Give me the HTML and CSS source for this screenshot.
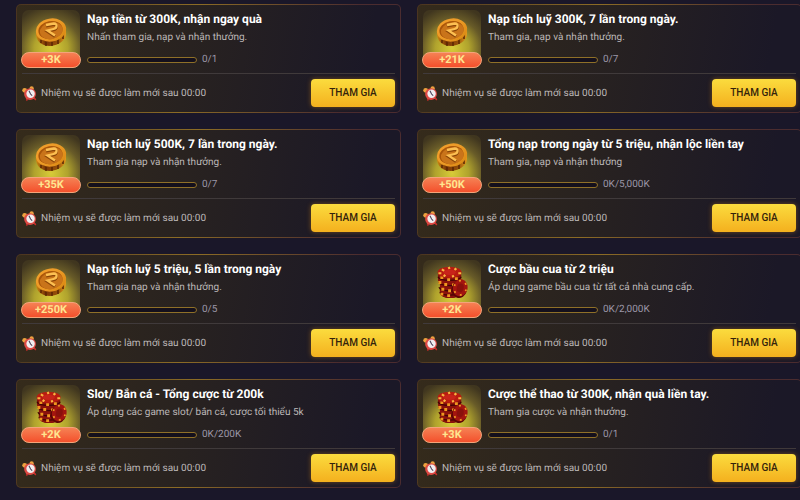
FILE: index.html
```
<!DOCTYPE html>
<html lang="vi">
<head>
  <meta charset="UTF-8">
  <meta name="viewport" content="width=device-width, initial-scale=1.0">
  <title>Nhiệm vụ</title>
  <link rel="stylesheet" href="styles.css">
</head>
<body>
  <svg class="sprite" aria-hidden="true">
    <defs>
      <linearGradient id="coinFace" x1="0" y1="0" x2="1" y2="1">
        <stop offset="0" stop-color="#f5a02c"/>
        <stop offset="0.5" stop-color="#eb9a26"/>
        <stop offset="1" stop-color="#d8860f"/>
      </linearGradient>
      <linearGradient id="coinEdge" x1="0" y1="0" x2="1" y2="0">
        <stop offset="0" stop-color="#d08a12"/>
        <stop offset="0.3" stop-color="#7a3606"/>
        <stop offset="0.7" stop-color="#94500a"/>
        <stop offset="1" stop-color="#e59a1c"/>
      </linearGradient>
      <symbol id="coin" viewBox="0 0 32 30">
        <path d="M1 15v3c1 7 6 11 14 11 9-.5 16-6 16-12v-5z" fill="url(#coinEdge)"/>
        <path d="M6 23v3M11 25v4M17 25v4M23 22v5M28 17v5" stroke="#5a2603" stroke-width="1.500"/>
        <ellipse cx="16" cy="13" rx="15.200" ry="11.500" transform="rotate(-10 16 13)" fill="url(#coinFace)"/>
        <ellipse cx="15.500" cy="13" rx="12.200" ry="9" transform="rotate(-10 16 13)" fill="#a9560a"/>
        <ellipse cx="16.200" cy="13.800" rx="11.500" ry="8.300" transform="rotate(-10 16 13)" fill="#c9741a"/>
        <path d="M11 9l8-1.500c3.500 0 3.500 4.500-.5 5.500l-6 1.500 7.500 5" fill="none" stroke="#8a4508" stroke-width="2.800"/>
        <path d="M11 8l8-1.500c3.500 0 3.500 4.500-.5 5.500l-6 1.500 7.500 5" fill="none" stroke="#fdc052" stroke-width="2.300"/>
      </symbol>
      <symbol id="chips" viewBox="0 0 32 34">
        <path d="M3 22v6c1 3 5 5 10 5s9-2 10-5v-6z" fill="#5c0606"/>
        <path d="M1 6v9l2 3v10c1 3 5 5 11 5s11-2 11-5V6z" fill="#8a120c"/>
        <path d="M1 11c2 5 22 5 24 0M2 16.500c2 5 22 5 23 0M2 22c2 5 22 5 23 0M3 27c2 4 18 4 20 0" fill="none" stroke="#430304" stroke-width="1.400"/>
        <path d="M5 10.500v3M12 12.500v3M20 11.500v3M3 15.500v3M9 17.500v3M17 18v3M6 22.500v3M13 24v3M5 27.500v3M12 29v3" stroke="#f0971f" stroke-width="3"/>
        <ellipse cx="13" cy="6.500" rx="12.300" ry="5.800" fill="#b81c10"/>
        <path d="M5 3.500l2.500 1.500M12 1l1 2M20 2.500l-2 1.500M1.500 7.500h3M22 7.500h3M7 11l1.500-2M17 11.500l-1-2" stroke="#f9b440" stroke-width="2.200"/>
        <ellipse cx="13" cy="6.500" rx="6.500" ry="2.800" fill="#c8241a"/>
        <ellipse cx="23" cy="24" rx="8" ry="9" transform="rotate(15 23 24)" fill="#5b0505"/>
        <ellipse cx="24" cy="22.500" rx="7.500" ry="8.800" transform="rotate(15 24 22.500)" fill="#a3150f"/>
        <ellipse cx="24" cy="22.500" rx="6.300" ry="7.500" transform="rotate(15 24 22.500)" fill="none" stroke="#ef9a24" stroke-width="1.800" stroke-dasharray="2 5.200"/>
        <ellipse cx="24" cy="22.500" rx="3.500" ry="4.500" transform="rotate(15 24 22.500)" fill="#8a100c"/>
      </symbol>
      <symbol id="clock" viewBox="0 0 28 28">
        <path d="M10 23l-1 3M22 22l3 3" stroke="#c92b28" stroke-width="3" stroke-linecap="round"/>
        <circle cx="5" cy="8" r="4.500" fill="#eda23f"/>
        <circle cx="18" cy="4.500" r="4" fill="#eda23f"/>
        <circle cx="15" cy="15" r="11" fill="#dd4a44"/>
        <circle cx="16" cy="14.500" r="7.800" fill="#f1eef0"/>
        <path d="M13 9l3 6 3 3" fill="none" stroke="#48405a" stroke-width="2"/>
      </symbol>
    </defs>
  </svg>

  <main class="missions">
    <article class="card">
      <div class="card-top">
        <div class="reward">
          <svg class="reward-icon coin"><use href="#coin"/></svg>
          <span class="badge">+3K</span>
        </div>
        <div class="info">
          <h2>Nạp tiền từ 300K, nhận ngay quà</h2>
          <p>Nhấn tham gia, nạp và nhận thưởng.</p>
          <div class="progress"><div class="bar"></div><span>0/1</span></div>
        </div>
      </div>
      <div class="card-bottom">
        <svg class="clock"><use href="#clock"/></svg>
        <span>Nhiệm vụ sẽ được làm mới sau 00:00</span>
        <button class="btn" type="button">THAM GIA</button>
      </div>
    </article>

    <article class="card">
      <div class="card-top">
        <div class="reward">
          <svg class="reward-icon coin"><use href="#coin"/></svg>
          <span class="badge">+21K</span>
        </div>
        <div class="info">
          <h2>Nạp tích luỹ 300K, 7 lần trong ngày.</h2>
          <p>Tham gia, nạp và nhận thưởng.</p>
          <div class="progress"><div class="bar"></div><span>0/7</span></div>
        </div>
      </div>
      <div class="card-bottom">
        <svg class="clock"><use href="#clock"/></svg>
        <span>Nhiệm vụ sẽ được làm mới sau 00:00</span>
        <button class="btn" type="button">THAM GIA</button>
      </div>
    </article>

    <article class="card">
      <div class="card-top">
        <div class="reward">
          <svg class="reward-icon coin"><use href="#coin"/></svg>
          <span class="badge">+35K</span>
        </div>
        <div class="info">
          <h2>Nạp tích luỹ 500K, 7 lần trong ngày.</h2>
          <p>Tham gia nạp và nhận thưởng.</p>
          <div class="progress"><div class="bar"></div><span>0/7</span></div>
        </div>
      </div>
      <div class="card-bottom">
        <svg class="clock"><use href="#clock"/></svg>
        <span>Nhiệm vụ sẽ được làm mới sau 00:00</span>
        <button class="btn" type="button">THAM GIA</button>
      </div>
    </article>

    <article class="card">
      <div class="card-top">
        <div class="reward">
          <svg class="reward-icon coin"><use href="#coin"/></svg>
          <span class="badge">+50K</span>
        </div>
        <div class="info">
          <h2>Tổng nạp trong ngày từ 5 triệu, nhận lộc liền tay</h2>
          <p>Tham gia, nạp và nhận thưởng</p>
          <div class="progress"><div class="bar"></div><span>0K/5,000K</span></div>
        </div>
      </div>
      <div class="card-bottom">
        <svg class="clock"><use href="#clock"/></svg>
        <span>Nhiệm vụ sẽ được làm mới sau 00:00</span>
        <button class="btn" type="button">THAM GIA</button>
      </div>
    </article>

    <article class="card">
      <div class="card-top">
        <div class="reward">
          <svg class="reward-icon coin"><use href="#coin"/></svg>
          <span class="badge">+250K</span>
        </div>
        <div class="info">
          <h2>Nạp tích luỹ 5 triệu, 5 lần trong ngày</h2>
          <p>Tham gia nạp và nhận thưởng.</p>
          <div class="progress"><div class="bar"></div><span>0/5</span></div>
        </div>
      </div>
      <div class="card-bottom">
        <svg class="clock"><use href="#clock"/></svg>
        <span>Nhiệm vụ sẽ được làm mới sau 00:00</span>
        <button class="btn" type="button">THAM GIA</button>
      </div>
    </article>

    <article class="card">
      <div class="card-top">
        <div class="reward">
          <svg class="reward-icon chips"><use href="#chips"/></svg>
          <span class="badge">+2K</span>
        </div>
        <div class="info">
          <h2>Cược bầu cua từ 2 triệu</h2>
          <p>Áp dụng game bầu cua từ tất cả nhà cung cấp.</p>
          <div class="progress"><div class="bar"></div><span>0K/2,000K</span></div>
        </div>
      </div>
      <div class="card-bottom">
        <svg class="clock"><use href="#clock"/></svg>
        <span>Nhiệm vụ sẽ được làm mới sau 00:00</span>
        <button class="btn" type="button">THAM GIA</button>
      </div>
    </article>

    <article class="card">
      <div class="card-top">
        <div class="reward">
          <svg class="reward-icon chips"><use href="#chips"/></svg>
          <span class="badge">+2K</span>
        </div>
        <div class="info">
          <h2>Slot/ Bắn cá - Tổng cược từ 200k</h2>
          <p>Áp dụng các game slot/ bắn cá, cược tối thiểu 5k</p>
          <div class="progress"><div class="bar"></div><span>0K/200K</span></div>
        </div>
      </div>
      <div class="card-bottom">
        <svg class="clock"><use href="#clock"/></svg>
        <span>Nhiệm vụ sẽ được làm mới sau 00:00</span>
        <button class="btn" type="button">THAM GIA</button>
      </div>
    </article>

    <article class="card">
      <div class="card-top">
        <div class="reward">
          <svg class="reward-icon chips"><use href="#chips"/></svg>
          <span class="badge">+3K</span>
        </div>
        <div class="info">
          <h2>Cược thể thao từ 300K, nhận quà liền tay.</h2>
          <p>Tham gia cược và nhận thưởng.</p>
          <div class="progress"><div class="bar"></div><span>0/1</span></div>
        </div>
      </div>
      <div class="card-bottom">
        <svg class="clock"><use href="#clock"/></svg>
        <span>Nhiệm vụ sẽ được làm mới sau 00:00</span>
        <button class="btn" type="button">THAM GIA</button>
      </div>
    </article>
  </main>
</body>
</html>
```

FILE: styles.css
```
:root {
  --background: #1a1729;
  --text: #ffffff;
  --text-secondary: #bdb8b8;
  --text-muted: #9c97a8;
  --gold: #8f7028;
}

* {
  box-sizing: border-box;
}

body {
  margin: 0;
  font-family: Roboto, sans-serif;
  font-size: 10px;
  text-rendering: geometricPrecision;
  background: var(--background);
  color: var(--text-secondary);
  overflow-x: hidden;
}

.sprite {
  position: absolute;
  width: 0;
  height: 0;
}

.missions {
  display: grid;
  grid-template-columns: 1fr 1fr;
  gap: 16px;
  padding: 4px 0 12px 16px;
  margin-right: -2px;
}

.card {
  padding: 5px;
  border: 1px solid transparent;
  border-radius: 5px;
  background:
    linear-gradient(100deg, #352b1b 0%, #282220 45%, #1b1827 90%) padding-box,
    linear-gradient(100deg, #4a3420 0%, #8c6c25 45%, #4b2c2f 85%) border-box;
}

.card-top {
  display: flex;
  gap: 7px;
  height: 63px;
}

.reward {
  position: relative;
  width: 58px;
  height: 58px;
  border-radius: 7px;
  background: radial-gradient(circle at 50% 66%, #d8cc38 0%, #b0a32d 35%, #685b28 62%, #40361f 88%);
  display: flex;
  justify-content: center;
}

.reward-icon.coin {
  width: 32px;
  height: 30px;
  margin-top: 7px;
}

.reward-icon.chips {
  width: 31px;
  height: 33px;
  margin-top: 6px;
}

.badge {
  position: absolute;
  left: -1px;
  right: -1px;
  bottom: 0;
  height: 16px;
  border: 1px solid #f4a47a;
  border-radius: 8px;
  background: linear-gradient(#f58154, #f4502c);
  color: #ffe58f;
  font-size: 11px;
  font-weight: 700;
  line-height: 14px;
  text-align: center;
}

.info {
  flex: 1;
}

h2 {
  margin: 1px 0 0;
  color: var(--text);
  font-size: 12px;
  font-weight: 700;
  line-height: 16px;
}

p {
  margin: 4px 0 0;
  line-height: 14px;
}

.progress {
  display: flex;
  align-items: center;
  gap: 5px;
  margin-top: 8px;
  color: var(--text-muted);
  line-height: 14px;
}

.bar {
  width: 110px;
  height: 6px;
  border: 1px solid var(--gold);
  border-radius: 3px;
  background: #14101c;
}

.card-bottom {
  display: flex;
  align-items: center;
  gap: 4px;
  padding-top: 5px;
  border-top: 1px solid #403a3b;
}

.clock {
  width: 15px;
  height: 15px;
}

.btn {
  width: 84px;
  height: 28px;
  margin-left: auto;
  padding: 0 0 1px;
  border: none;
  border-radius: 4px;
  background: linear-gradient(#fbdc3e, #f4b01e);
  box-shadow: 0 0 5px rgba(240, 150, 20, 0.4);
  color: #33230b;
  font-family: inherit;
  font-size: 10px;
  font-weight: 500;
  cursor: pointer;
}
```
